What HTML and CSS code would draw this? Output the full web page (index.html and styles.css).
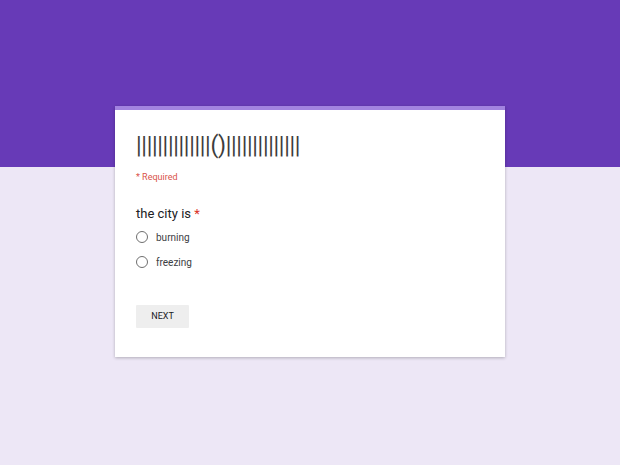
FILE: index.html
```html
<!DOCTYPE html>
<html>
<head>
<meta charset="utf-8">
<link rel="stylesheet" href="styles.css">
</head>
<body>
<div class="card">
  <div class="title">||||||||||||||()||||||||||||||</div>
  <div class="required">* Required</div>
  <div class="question">the city is <span class="star">*</span></div>
  <div class="options">
    <label class="option"><span class="radio"></span><span class="opt-text">burning</span></label>
    <label class="option"><span class="radio"></span><span class="opt-text">freezing</span></label>
  </div>
  <div class="actions"><button class="next">NEXT</button></div>
</div>
</body>
</html>
```

FILE: styles.css
```css
html, body {
  margin: 0;
  padding: 0;
}
body {
  width: 620px;
  height: 465px;
  background: linear-gradient(#673ab7 0, #673ab7 167px, #ede7f6 167px, #ede7f6 100%);
  font-family: Roboto, "Liberation Sans", sans-serif;
  color: #202124;
  padding-top: 106px;
  box-sizing: border-box;
}
.card {
  width: 390px;
  margin: 0 0 0 115px;
  background: #fff;
  border-top: 4px solid #a283e0;
  box-shadow: 0 1px 3px rgba(0,0,0,0.25);
  padding: 20px 21px 28px 21px;
  box-sizing: border-box;
  height: 251px;
}
.title {
  font-size: 23px;
  line-height: 32px;
  color: #3c3c3c;
  letter-spacing: -0.3px;
  white-space: nowrap;
}
.required {
  font-size: 9px;
  color: #d9534a;
  margin-top: 9px;
  line-height: 12px;
}
.question {
  font-size: 13px;
  line-height: 18px;
  margin-top: 22px;
  color: #202124;
}
.star {
  color: #d93025;
}
.options {
  display: flex;
  flex-direction: column;
  gap: 7px;
  margin-top: 5px;
}
.option {
  display: flex;
  align-items: center;
  height: 18px;
}
.radio {
  width: 12px;
  height: 12px;
  border: 1.5px solid #6f6f6f;
  border-radius: 50%;
  box-sizing: border-box;
  margin-right: 8px;
}
.opt-text {
  font-size: 10px;
  color: #3c4043;
}
.actions {
  margin-top: 33px;
}
.next {
  width: 53px;
  height: 23px;
  border: none;
  background: #eeeeee;
  font-family: Roboto, "Liberation Sans", sans-serif;
  font-size: 9px;
  font-weight: 400;
  color: #202124;
  padding: 0;
  border-radius: 1px;
}
```
